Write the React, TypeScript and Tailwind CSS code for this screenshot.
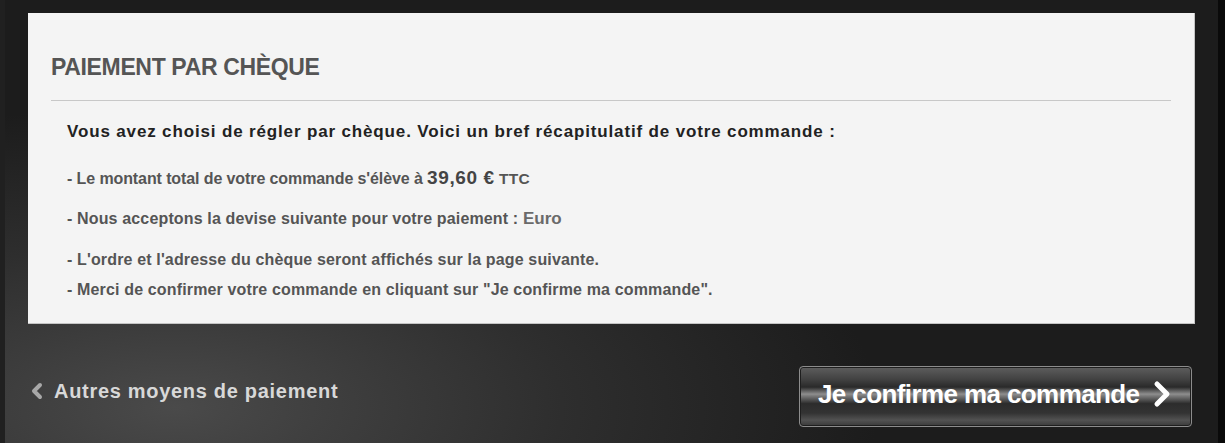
const ChevronLeft = () => (
  <svg width="14" height="18" viewBox="0 0 14 18" className="shrink-0">
    <polyline
      points="10,3 4,9 10,15"
      fill="none"
      stroke="#a8a8a8"
      strokeWidth="4"
      strokeLinecap="round"
      strokeLinejoin="round"
    />
  </svg>
);

const ChevronRight = () => (
  <svg width="20" height="28" viewBox="0 0 20 28" className="shrink-0">
    <polyline
      points="5,4 15,14 5,24"
      fill="none"
      stroke="#ffffff"
      strokeWidth="5"
      strokeLinecap="round"
      strokeLinejoin="round"
    />
  </svg>
);

const App = () => {
  return (
    <div className="w-full min-h-screen flex font-['Liberation_Sans',Arial,sans-serif]">
      <div className="w-[5px] bg-[#202020]" />
      <main className="flex-1 bg-[#1c1c1c] bg-[radial-gradient(ellipse_58%_68%_at_14%_92%,#4a4a4a_0%,#2e2e2e_55%,#1c1c1c_100%)] pt-[13px] px-[23px]">
        <section className="bg-[#f4f4f4] border-r border-b border-[#c4c4c4] h-[311px] pt-[40px] px-[23px]">
          <h2 className="h-[28px] leading-[28px] text-[23px] tracking-[-0.35px] font-bold text-[#555555]">
            PAIEMENT PAR CHÈQUE
          </h2>
          <div className="mt-[19px] border-t border-[#c8c8c8]" />
          <div className="px-[16px]">
            <p className="mt-[21px] h-[20px] leading-[20px] text-[17px] tracking-[0.85px] font-bold text-[#222222] whitespace-nowrap">
              Vous avez choisi de régler par chèque. Voici un bref récapitulatif de votre commande :
            </p>
            <p className="mt-[26px] h-[20px] leading-[20px] text-[16px] tracking-[-0.1px] font-bold text-[#555555] whitespace-nowrap">
              - Le montant total de votre commande s'élève à{" "}
              <span className="text-[19px] tracking-[0.6px] text-[#444444]">39,60 €</span>{" "}
              <span className="text-[15.5px] tracking-[0.3px]">TTC</span>
            </p>
            <p className="mt-[21px] h-[20px] leading-[20px] text-[16px] tracking-[0.15px] font-bold text-[#555555] whitespace-nowrap">
              - Nous acceptons la devise suivante pour votre paiement :{" "}
              <span className="text-[17px] tracking-[0px] text-[#6a6a6a]">Euro</span>
            </p>
            <p className="mt-[21px] h-[20px] leading-[20px] text-[16px] tracking-[0.15px] font-bold text-[#555555] whitespace-nowrap">
              - L'ordre et l'adresse du chèque seront affichés sur la page suivante.
            </p>
            <p className="mt-[10px] h-[20px] leading-[20px] text-[16px] tracking-[0.15px] font-bold text-[#555555] whitespace-nowrap">
              - Merci de confirmer votre commande en cliquant sur "Je confirme ma commande".
            </p>
          </div>
        </section>

        <div className="mt-[42px] flex items-start justify-between pl-[2px] pr-[3px]">
          <a href="#" className="mt-[12px] flex items-center gap-[10px] h-[26px]">
            <ChevronLeft />
            <span className="text-[20px] tracking-[0.7px] font-bold text-[#d8d8d8] leading-[26px]">
              Autres moyens de paiement
            </span>
          </a>
          <button className="h-[61px] w-[393px] rounded-[4px] border border-[#8c8c8c] shadow-[inset_0_0_0_1px_#1e1e1e] bg-[linear-gradient(to_bottom,#5e5e5e_0%,#404040_22%,#2a2a2a_34%,#8e8e8e_46%,#7a7a7a_49%,#2c2c2c_62%,#333333_78%,#525252_90%,#3a3a3a_100%)] flex items-center pl-[18px] pb-[5px] gap-[13px]">
            <span className="text-[26px] tracking-[-0.6px] font-bold text-white leading-[30px]">
              Je confirme ma commande
            </span>
            <ChevronRight />
          </button>
        </div>
      </main>
      <div className="w-[7px] bg-[#0a0a0a]" />
    </div>
  );
};

export default App;
